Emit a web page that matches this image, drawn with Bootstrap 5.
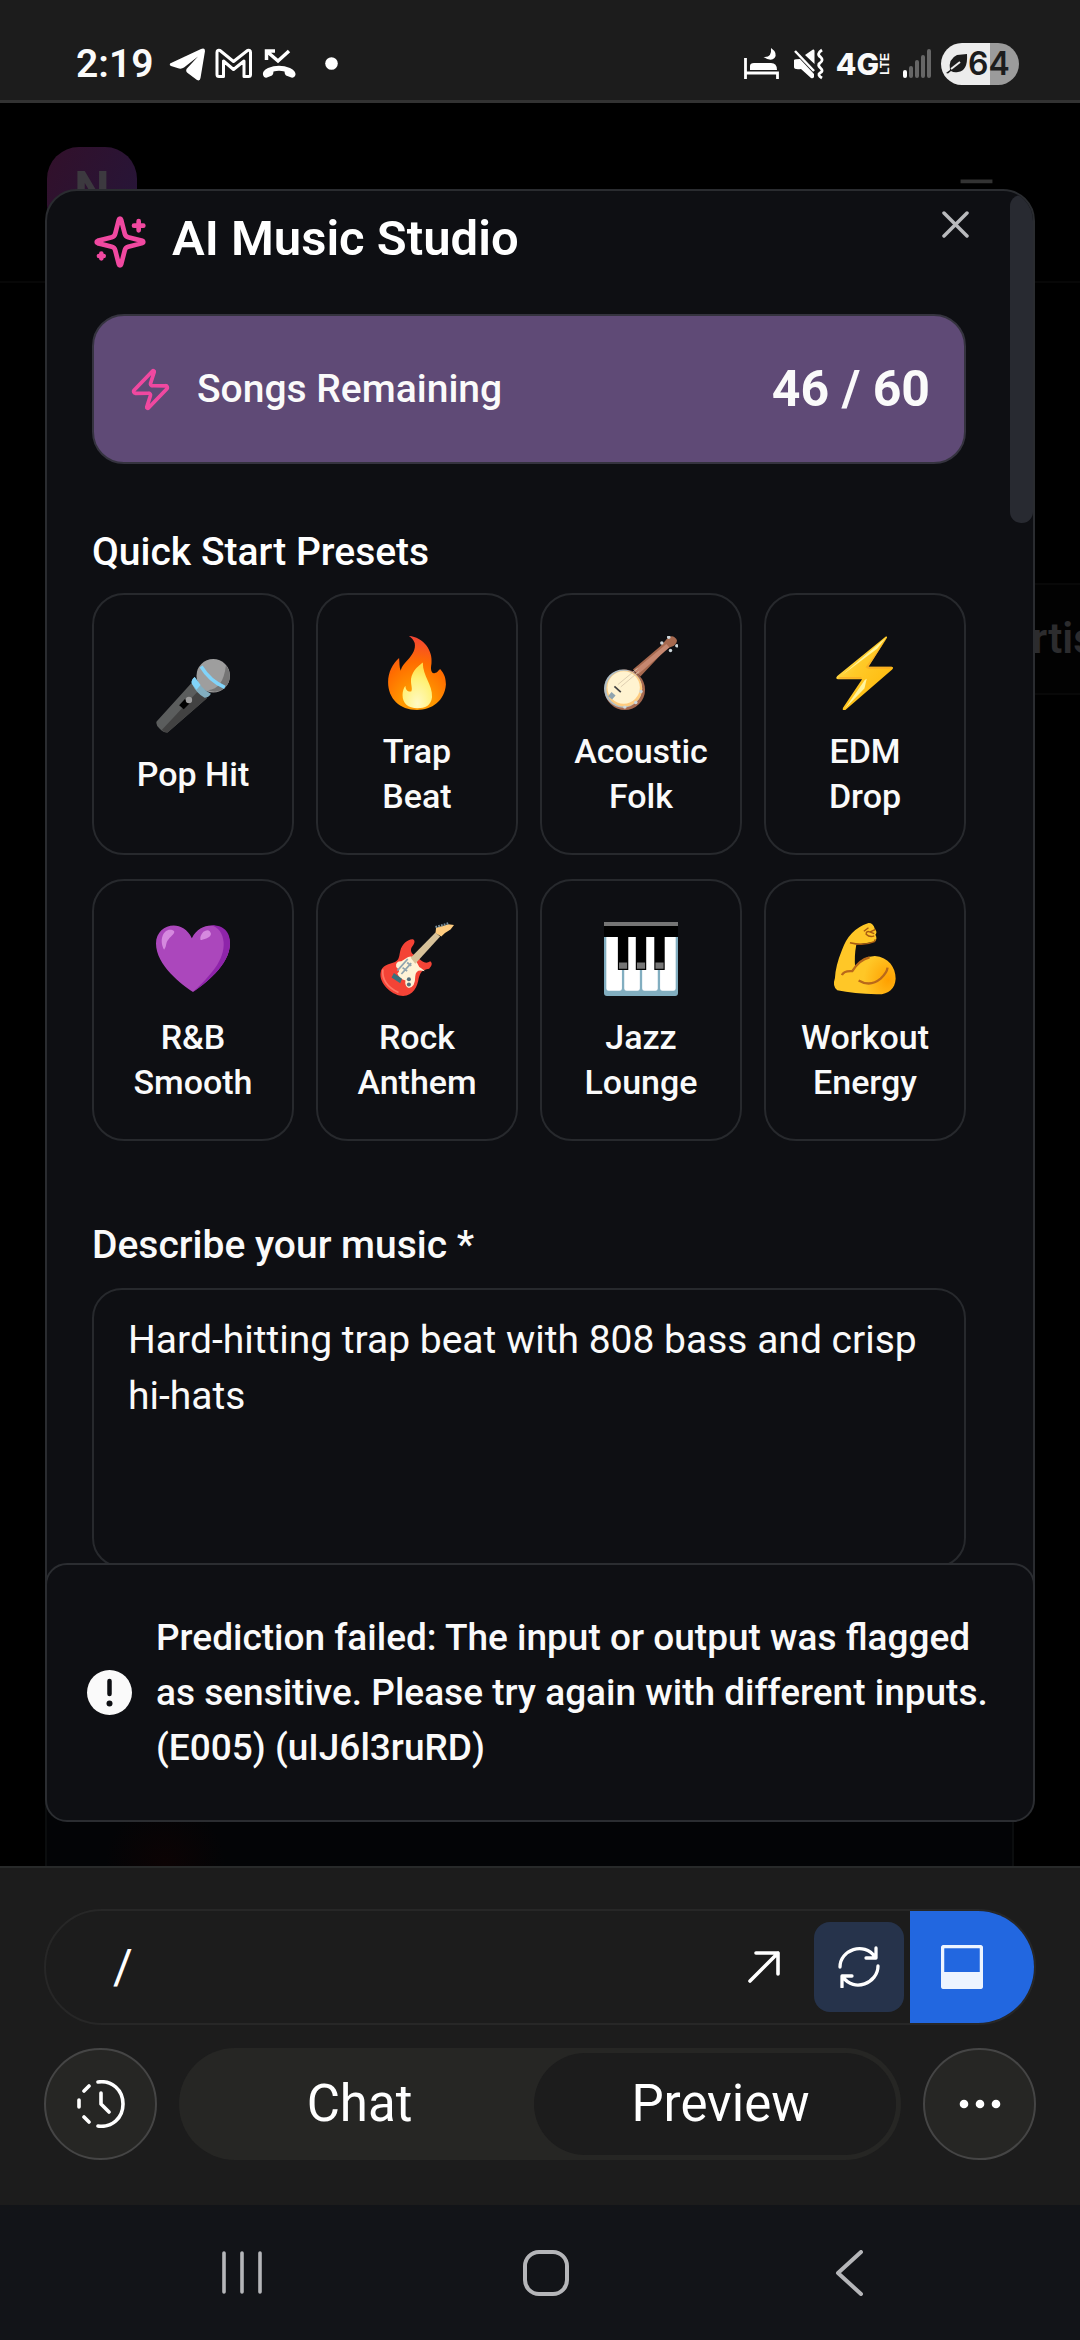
<!DOCTYPE html>
<html lang="en" data-bs-theme="dark">
<head>
<meta charset="utf-8">
<meta name="viewport" content="width=device-width, initial-scale=1">
<title>AI Music Studio</title>
<link href="https://cdn.jsdelivr.net/npm/bootstrap@5.3.0/dist/css/bootstrap.min.css" rel="stylesheet">
<style>
body{font-family:Roboto,"Noto Sans",sans-serif;background:#000;color:#fafafa;min-height:100vh;font-size:39px;line-height:56px}
svg{display:block;flex:none}
.statusbar{background:#1c1c1c;border-bottom:3px solid #323232;padding:42px 61px 15px 76px;height:103px}
.clock{font-size:39px;line-height:44px;font-weight:600}
.net{font:800 30px/44px Inter,sans-serif;margin-left:12px}
.lte{font:700 12px/12px "Liberation Sans",sans-serif;writing-mode:vertical-rl;rotate:180deg}
.battery{width:78px;height:42px;border-radius:21px;background:linear-gradient(90deg,#ececec 63%,#9b9b9b 63%);color:#1c1c1c;font:600 32px/42px Inter,sans-serif;padding:0 10px 0 5px}
.stage{overflow:hidden}
.site-head{padding:44px 81px 44px 47px;border-bottom:2px solid #070707}
.site-logo{width:90px;height:90px;border-radius:32px;background:linear-gradient(120deg,#32102a,#25163a);color:#3c393f;font-size:50px;font-weight:700;line-height:86px}
.site-tabs{margin-top:300px}
.site-tab{width:110px;height:112px;border:solid #080808;border-width:2px 0;padding-left:34px;font-size:42px;font-weight:600;line-height:108px;color:#2c2c2e;background:#020202}
.site-panel{height:72px;margin:0 66px 0 45px;border:solid #0b0d0e;border-width:0 2px;background:radial-gradient(circle at 118px 70px,#0c0304 0,#030406 60px)}
.studio{top:86px;bottom:86px;left:45px;right:45px;background:#0e0f13;border:2px solid #2a2c30;border-radius:32px;padding:23px 67px 0 45px;overflow:hidden}
.studio-title{font-size:49px;line-height:50px;font-weight:600}
.close-x{top:3px;right:44px;width:68px;height:60px;color:#b9babd}
.thumb{top:4px;right:0;width:23px;height:328px;border-radius:11px;background:#282a31}
.quota{background:#5f4a76;border:2px solid #35333f;border-radius:32px;padding:0 34px;height:150px;margin:44px 0 60px;font-weight:500}
.quota b{font-size:50px;line-height:54px;font-weight:700}
.caption{font-size:39px;line-height:56px;font-weight:500}
.presets{display:grid;grid-template-columns:repeat(4,1fr);gap:24px 22px;margin-top:13px;margin-bottom:76px}
.preset{border:2px solid #27292d;border-radius:32px;background:#0e0f13;color:#fafafa;padding:41px 32px 34px;gap:19px;font-size:34px;line-height:45px;font-weight:500;min-height:262px}
.prompt{background:#0e0f13;border:2px solid #27292d;border-radius:30px;padding:22px 34px;height:280px;font-size:39px;line-height:56px;color:#fafafa;resize:none;margin-top:15px}
.prompt:focus{background:#0e0f13}
.notice{left:45px;right:45px;bottom:44px;background:#0e0f13;border:2px solid #2b2d31;border-radius:22px;padding:45px 39px 45px 40px;gap:24px;font-size:37px;line-height:55px;font-weight:500}
.dock{background:#1c1c1c;border-top:2px solid #282a2a;padding:41px 44px 45px;gap:23px}
.address{height:116px;border:2px solid #272727;border-radius:58px;overflow:hidden}
.address input{padding:0 0 0 67px;font-size:48px;line-height:60px;color:#fff}
.open-btn{width:64px;height:64px}
.reload{width:90px;height:90px;border-radius:16px;background:#26334b;margin:0 6px 0 18px}
.layout-btn{width:124px;background:#2267e0;padding-right:20px}
.round{width:113px;height:112px;border-radius:56px;border:2px solid #454545;background:#262624;color:#fff}
.switch{background:#262624;border-radius:56px;height:112px;padding:5px 0;font-size:51px;margin:0 22px;isolation:isolate}
.switch button{color:#fff;line-height:60px}
.switch .active::before{content:"";position:absolute;inset:0 5px 0 -6px;border-radius:52px;background:#1c1c1c;z-index:-1}
.sysnav{background:#121418;height:135px;padding:0 214px;color:#b5b6b9}
button{border:0;background:none;padding:0}
</style>
</head>
<body class="d-flex flex-column">

<header class="statusbar d-flex align-items-center justify-content-between flex-shrink-0">
  <div class="d-flex align-items-center">
    <span class="clock">2:19</span>
    <svg class="ms-3" width="132" height="40" viewBox="0 0 132 40" fill="#fff">
      <path d="M1 19.500Q0 21 2 22L10 24.500Q13 25 15 23.500L29 12.500L17.500 25Q16.500 27 18 28.500L28 36Q31 37.500 31.500 34L36 7Q36 3.500 32 5Z"/>
      <path d="M48 30.500V8.500Q48 5.500 51 6.500L64.500 17.500L78.500 6.500Q81.500 5.500 81.500 8.500V30.500Q81.500 32.500 79.500 32.500H75V17L64.500 25.500L54.500 17V32.500H50Q48 32.500 48 30.500Z" fill="none" stroke="#fff" stroke-width="3" stroke-linejoin="round"/>
      <path d="M97.500 16V7H106M98 7.500L109 17L120 7" fill="none" stroke="#fff" stroke-width="3.500"/>
      <path d="M94 31Q93 27 99 24Q110 19.500 121 24Q127 27 126.500 31Q125 35 121 33L117 31.500Q115.500 30 115.500 27.500Q110 26 104.500 27.500Q104.500 30 103 31.500L98 33.500Q95 34.500 94 31Z"/>
    </svg>
    <svg class="ms-4" width="13" height="13" viewBox="0 0 13 13"><circle cx="6.500" cy="6.500" r="6.300" fill="#fff"/></svg>
  </div>
  <div class="d-flex align-items-center">
    <svg width="80" height="34" viewBox="0 0 80 34" fill="#fff">
      <path d="M1.500 11V32M1 26H33.500V32" fill="none" stroke="#fff" stroke-width="2.800"/>
      <path d="M6 23V19Q6 16 10 16H27Q33 16 33 23Z"/>
      <path d="M27 1Q34 6 30.500 11Q27 15 19.500 10Q28 11 27 1Z"/>
      <path d="M50 13Q51 12 56 12L70 27V30Q69 32 67 31L57 22Q50 23 50 20ZM61 8L69 2.500Q70.500 2 70.500 4V17Z"/>
      <path d="M51 4L70 24" stroke="#fff" stroke-width="2.500"/>
      <path d="M78 3Q72 7 76.500 10Q80 13 76 16Q73 18 76.500 21Q80 24 76 26Q73 28 78 31" fill="none" stroke="#fff" stroke-width="2.800"/>
    </svg>
    <span class="net">4G</span><span class="lte">LTE</span>
    <svg class="mx-2" width="34" height="30" viewBox="0 0 34 30"><g stroke-width="4" stroke-linecap="round"><path d="M6 23V27" stroke="#fff"/><path d="M12 19V27M18 13V27M24 8V27M30 2V27" stroke="#666"/></g></svg>
    <div class="battery d-flex align-items-center justify-content-between">
      <svg width="22" height="20" viewBox="0 0 22 20"><path d="M0 19L4 16Q2 5 11 1L21 0Q22 17 12 18Q8 19 5 17L2 19.500Z" fill="#1c1c1c"/><path d="M5 15L14 8" stroke="#ececec" stroke-width="2"/></svg>
      <span>64</span>
    </div>
  </div>
</header>

<main class="stage position-relative flex-grow-1 d-flex flex-column">
  <div class="site-head d-flex align-items-center justify-content-between">
    <div class="site-logo text-center">N</div>
    <svg width="45" height="45" viewBox="0 0 24 24" stroke="#333" stroke-width="2"><path d="M3.500 6H20.500M3.500 12H20.500M3.500 18H20.500"/></svg>
  </div>
  <div class="site-tabs d-flex justify-content-end"><div class="site-tab overflow-hidden text-nowrap">Artists</div></div>
  <div class="site-panel mt-auto"></div>

  <section class="studio position-absolute" aria-labelledby="studio-title">
    <div class="d-flex align-items-start">
      <svg width="56" height="56" viewBox="0 0 24 24" fill="none" stroke="#f048a0" stroke-width="2" stroke-linecap="round" stroke-linejoin="round"><path d="M9.937 15.500A2 2 0 0 0 8.500 14.063l-6.135-1.582a.5.5 0 0 1 0-.962L8.500 9.936A2 2 0 0 0 9.937 8.500l1.582-6.135a.5.5 0 0 1 .963 0L14.063 8.500A2 2 0 0 0 15.500 9.937l6.135 1.581a.5.5 0 0 1 0 .964L15.500 14.063a2 2 0 0 0-1.437 1.437l-1.582 6.135a.5.5 0 0 1-.963 0z"/><path d="M20 3v4M22 5h-4M4 17v2M5 18H3"/></svg>
      <h1 class="studio-title m-0 ps-4" id="studio-title">AI Music Studio</h1>
    </div>
    <button class="close-x position-absolute d-flex align-items-center justify-content-center" type="button" aria-label="Close"><svg width="27" height="27" viewBox="0 0 27 27" stroke="currentColor" stroke-width="3.500" stroke-linecap="round"><path d="M2 2L25 25M25 2L2 25"/></svg></button>
    <div class="thumb position-absolute"></div>

    <div class="quota d-flex align-items-center justify-content-between">
      <div class="d-flex align-items-center">
        <svg width="45" height="45" viewBox="0 0 24 24" fill="none" stroke="#f048a0" stroke-width="2" stroke-linecap="round" stroke-linejoin="round"><path d="M4 14a1 1 0 0 1-.78-1.630l9.900-10.200a.5.5 0 0 1 .86.460l-1.920 6.020A1 1 0 0 0 13 10h7a1 1 0 0 1 .78 1.630l-9.900 10.200a.5.5 0 0 1-.86-.460l1.920-6.020A1 1 0 0 0 11 14z"/></svg>
        <span class="ps-4">Songs Remaining</span>
      </div>
      <b>46 / 60</b>
    </div>

    <h2 class="caption m-0">Quick Start Presets</h2>
    <div class="presets">
      <button class="preset d-flex flex-column align-items-center justify-content-center" type="button">
        <svg width="74" height="74" viewBox="0 0 128 128"><path d="M61 42L1 108Q-1 114 6 120Q13 128 20 127L88 68Z" fill="#5b5d5d"/><path d="M75 53L10 123Q15 128 20 127L88 68Z" fill="#424242"/><path d="M40 80L50 69L58 77L48 87Z"/><circle cx="57" cy="71" r="5.500" fill="#9e9e9e"/><circle cx="99" cy="29" r="29" fill="#9e9e9e"/><path d="M121 11Q135 31 120 49Q107 61 90 54Q116 53 121 11" fill="#757575"/><path d="M67 31Q60 36 62 43Q71 61 84 67Q91 67 95 60Q78 51 67 31Z" fill="#82aec0"/><path d="M67 31Q60 36 62 43L70 53L77 45Z" fill="#81d4fa"/><path d="M78 13Q93 38 119 49" fill="none" stroke="#81d4fa" stroke-width="6"/></svg>
        <span>Pop Hit</span>
      </button>
      <button class="preset d-flex flex-column align-items-center justify-content-center" type="button">
        <svg width="74" height="74" viewBox="0 0 128 128"><defs><radialGradient id="fl" cx=".5" cy="1" r="1"><stop offset=".3" stop-color="#ff9800"/><stop offset=".65" stop-color="#ff6d00"/><stop offset="1" stop-color="#f44336"/></radialGradient><radialGradient id="fi" cx=".5" cy=".9" r=".8"><stop offset="0" stop-color="#fff9c4"/><stop offset=".7" stop-color="#fff176"/><stop offset="1" stop-color="#ffe04f"/></radialGradient></defs><path d="M50 0C75 2 92 25 89 48C87 58 89 66 95 64C100 63 100 60 104 57C112 66 114 74 114 84C112 112 90 128 64 128C34 128 14 108 14 80C14 62 22 48 33 38C34 46 33 54 36 60C38 45 64 34 60 12C58 6 54 3 50 0Z" fill="url(#fl)"/><path d="M74 46C74 70 91 84 90 106C88 121 78 125 65 125C48 125 39 116 39 102C39 95 41 90 44 86C44 93 48 97 54 96C58 90 49 78 57 64C62 54 70 50 74 46Z" fill="url(#fi)"/></svg>
        <span>Trap Beat</span>
      </button>
      <button class="preset d-flex flex-column align-items-center justify-content-center" type="button">
        <svg width="74" height="74" viewBox="0 0 128 128"><circle cx="36" cy="93" r="35" fill="#a6694f"/><circle cx="33" cy="91" r="33" fill="#b0bec5"/><circle cx="35" cy="91" r="31" fill="#ffcc80"/><circle cx="34" cy="89" r="28" fill="#fff3d0"/><path d="M50 58L97 18L106 8Q115-3 122 2Q131 8 121 17L108 22L63 70Z" fill="#a6694f"/><path d="M52 60L108 14L113 20L59 66Z" fill="#c58770"/><path d="M24 84L58 56M29 88L61 61" stroke="#d9c9ac" stroke-width="1.500"/><path d="M18 87L29 97" stroke="#424242" stroke-width="3"/><path d="M13 97L20 103L14 110L7 104Z" fill="#90a4ae"/><g fill="#cfd8dc"><circle cx="100" cy="12" r="3"/><circle cx="112" cy="2" r="3"/><circle cx="115" cy="25" r="3"/><circle cx="126" cy="17" r="3"/><circle cx="55" cy="115" r="3"/><circle cx="64" cy="96" r="3"/><circle cx="36" cy="123" r="3"/></g></svg>
        <span>Acoustic Folk</span>
      </button>
      <button class="preset d-flex flex-column align-items-center justify-content-center" type="button">
        <svg width="74" height="74" viewBox="0 0 128 128"><defs><linearGradient id="bo" x1="0" y1="0" x2="1" y2="1"><stop offset="0" stop-color="#fff176"/><stop offset=".4" stop-color="#ffca28"/><stop offset="1" stop-color="#ffb300"/></linearGradient></defs><path d="M100 1L16 69Q12 74 17 75H59L26 124Q24 130 30 128L111 58Q115 53 109 53H70L102 3Q103 0 100 1Z" fill="url(#bo)"/><path d="M100 3L24 68L85 22ZM29 126L61 80Q63 75 67 74L63 91Z" fill="#fff59d"/><path d="M17 74H59L57 71H20ZM70 53L102 3L65 54L70 57H108L111 53Z" fill="#f9a825" opacity=".7"/></svg>
        <span>EDM Drop</span>
      </button>
      <button class="preset d-flex flex-column align-items-center justify-content-center" type="button">
        <svg width="74" height="74" viewBox="0 0 128 128"><path d="M64 121C45 108 0 75 0 37C0 4 45-8 62 28C80-8 128 4 128 37C128 75 82 108 64 121Z" fill="#ab47bc"/><path d="M94 5C128 5 128 30 128 37C128 75 82 108 64 121C94 93 119 66 117 35C116 20 108 8 94 5Z" fill="#8e24aa"/><path d="M14 48C4 30 14 10 28 14C39 18 22 25 18 37Q17 44 14 48ZM77 31Q75 25 82 17Q89 12 93 16Q99 23 88 28Q80 31 77 31Z" fill="#d589df"/></svg>
        <span>R&amp;B Smooth</span>
      </button>
      <button class="preset d-flex flex-column align-items-center justify-content-center" type="button">
        <svg width="74" height="74" viewBox="0 0 128 128"><path d="M35 50C38 38 49 29 57 30C62 33 59 38 56 42Q51 48 56 55L73 68Q80 73 87 68Q93 73 85 81C72 83 70 88 67 97C65 112 57 128 40 128C22 128-2 107 1 88C2 74 17 73 26 69C34 65 33 58 35 50Z" fill="#f44336"/><path d="M48 61Q56 57 61 65L68 78Q77 84 77 85Q62 80 61 94Q61 113 50 114Q42 111 44 101Q34 99 30 89Q37 85 28 78Q26 68 37 68Z" fill="#fff3d6"/><path d="M53 62L96 18L104 25L61 72Z" fill="#d7c29a"/><path d="M96 19L97 10L118 4L128 5L122 13Q111 19 106 25Z" fill="#ffcc80"/><path d="M96 9L120 2" stroke="#78909c" stroke-width="4" stroke-dasharray="3 2"/><path d="M30 84L48 64M37 90L54 71M39 79L47 85M47 70L54 76" stroke="#90a4ae" stroke-width="3"/><path d="M24 88L38 98L35 106L20 96Z" fill="#37717c"/><circle cx="50" cy="99" r="3.500" fill="#546e7a"/><circle cx="50" cy="108" r="3.500" fill="#546e7a"/><path d="M5 82Q2 108 32 122" fill="none" stroke="#ff7565" stroke-width="3"/></svg>
        <span>Rock Anthem</span>
      </button>
      <button class="preset d-flex flex-column align-items-center justify-content-center" type="button">
        <svg width="74" height="74" viewBox="0 0 128 128"><rect width="128" height="128" rx="5" fill="#82aec0"/><path d="M4 24H31V115Q31 119 27 119H8Q4 119 4 115ZM35 24H62V115Q62 119 58 119H39Q35 119 35 115ZM66 24H93V115Q93 119 89 119H70Q66 119 66 115ZM97 24H124V115Q124 119 120 119H101Q97 119 97 115Z" fill="#fff"/><path d="M28 24H38V70H28ZM58 24H70V70H58ZM90 24H101V70H90Z" fill="#fff"/><path d="M0 6H128V26H0ZM24 24H42V83H24ZM55 24H73V83H55ZM87 24H105V83H87Z"/><path d="M0 0H128V7H0ZM26 70H40V81H26ZM57 70H71V81H57ZM89 70H103V81H89Z" fill="#757575"/></svg>
        <span>Jazz Lounge</span>
      </button>
      <button class="preset d-flex flex-column align-items-center justify-content-center" type="button">
        <svg width="74" height="74" viewBox="0 0 128 128"><defs><radialGradient id="ar" cx=".88" cy=".8" r=".4"><stop offset="0" stop-color="#ffa000"/><stop offset="1" stop-color="#ffc727"/></radialGradient></defs><path d="M69 2Q78 1 81 12Q86 17 82 22Q86 29 81 34L49 39Q45 60 47 80Q56 60 81 59C105 61 117 79 117 98C116 116 104 126 84 125Q45 124 16 118Q7 112 12 97Q13 76 24 49Q36 13 69 2Z" fill="url(#ar)"/><path d="M38 36Q62 42 80 34L82 30M80 24Q72 27 66 21Q66 15 72 17L80 20M62 16L70 10M82 13L73 17" fill="none" stroke="#a85b12" stroke-width="2.500"/><path d="M24 92Q27 84 42 85Q54 65 72 61M53 101Q73 113 91 98Q102 88 103 79" fill="none" stroke="#b9691a" stroke-width="4"/></svg>
        <span>Workout Energy</span>
      </button>
    </div>

    <label class="caption d-block" for="prompt">Describe your music *</label>
    <textarea class="prompt form-control shadow-none overflow-hidden" id="prompt">Hard-hitting trap beat with 808 bass and crisp hi-hats</textarea>
  </section>

  <div class="notice position-absolute d-flex align-items-center" role="alert">
    <svg width="45" height="45" viewBox="0 0 45 45"><circle cx="22.500" cy="22.500" r="22.500" fill="#fafafa"/><path d="M22.500 11V24" stroke="#0e0f13" stroke-width="4.500" stroke-linecap="round"/><circle cx="22.500" cy="33.500" r="3" fill="#0e0f13"/></svg>
    <div>Prediction failed: The input or output was flagged as sensitive. Please try again with different inputs. (E005) (uIJ6l3ruRD)</div>
  </div>
</main>

<footer class="dock d-flex flex-column flex-shrink-0">
  <div class="address d-flex align-items-center">
    <input class="form-control border-0 bg-transparent shadow-none flex-grow-1" type="text" value="/" aria-label="Page path">
    <button class="open-btn d-flex align-items-center justify-content-center flex-shrink-0" type="button" aria-label="Open"><svg width="34" height="34" viewBox="0 0 34 34" fill="none" stroke="#fff" stroke-width="3.600" stroke-linecap="round" stroke-linejoin="round"><path d="M3 31L31 3M9 3H31V24"/></svg></button>
    <button class="reload d-flex align-items-center justify-content-center flex-shrink-0" type="button" aria-label="Reload"><svg width="42" height="42" viewBox="0 0 42 42" fill="none" stroke="#fff" stroke-width="3.300" stroke-linecap="round" stroke-linejoin="round"><path d="M2 21C2 4 26-5 37 11M38 2V12H28M40 20C40 37 16 47 5 31M4 41V30H14"/></svg></button>
    <button class="layout-btn d-flex align-items-center justify-content-center flex-shrink-0 align-self-stretch" type="button" aria-label="Toggle layout"><svg width="42" height="44" viewBox="0 0 42 44"><rect x="1.500" y="1.500" width="39" height="41" rx="2" fill="none" stroke="#edf4ff" stroke-width="3.500"/><path d="M1 27H41V42H1Z" fill="#edf4ff"/></svg></button>
  </div>
  <div class="d-flex align-items-center">
    <button class="round d-flex align-items-center justify-content-center flex-shrink-0" type="button" aria-label="History"><svg width="48" height="48" viewBox="0 0 48 48" fill="none" stroke="#fff" stroke-width="3.600" stroke-linecap="round" stroke-linejoin="round"><path d="M21 2C35 0 46 10 46 24S35 48 21 46M24 13V24L32 32M12 6L7 11M2 20V27M7 37L12 42"/></svg></button>
    <div class="switch d-flex flex-grow-1">
      <button class="w-50" type="button">Chat</button>
      <button class="w-50 active position-relative" type="button">Preview</button>
    </div>
    <button class="round d-flex align-items-center justify-content-center flex-shrink-0" type="button" aria-label="More"><svg width="42" height="10" viewBox="0 0 42 10" fill="#fff"><circle cx="5" cy="5" r="4.300"/><circle cx="21" cy="5" r="4.300"/><circle cx="37" cy="5" r="4.300"/></svg></button>
  </div>
</footer>

<nav class="sysnav d-flex align-items-center justify-content-between flex-shrink-0" aria-label="System">
  <button class="text-reset" type="button" aria-label="Recents"><svg width="48" height="46" viewBox="0 0 48 46" stroke="currentColor" stroke-width="3.600" stroke-linecap="round"><path d="M10 3V42M28 3V42M46 3V42"/></svg></button>
  <button class="text-reset" type="button" aria-label="Home"><svg width="46" height="46" viewBox="0 0 46 46" fill="none" stroke="currentColor" stroke-width="4"><rect x="2" y="2" width="42" height="42" rx="14"/></svg></button>
  <button class="text-reset" type="button" aria-label="Back"><svg width="36" height="46" viewBox="0 0 36 46" fill="none" stroke="currentColor" stroke-width="4" stroke-linecap="round" stroke-linejoin="round"><path d="M31 2L8 23L31 44"/></svg></button>
</nav>

<script src="https://cdn.jsdelivr.net/npm/bootstrap@5.3.0/dist/js/bootstrap.bundle.min.js"></script>
</body>
</html>
